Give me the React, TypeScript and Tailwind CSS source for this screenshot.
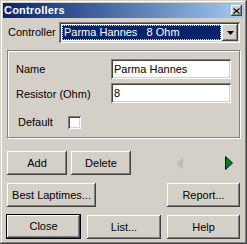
const raised =
  "bg-[#d4d0c8] shadow-[inset_-1px_-1px_#404040,inset_1px_1px_#ffffff,inset_-2px_-2px_#808080,inset_2px_2px_#d4d0c8]";
const sunken =
  "bg-white shadow-[inset_1px_1px_#808080,inset_-1px_-1px_#ffffff,inset_2px_2px_#404040,inset_-2px_-2px_#d4d0c8]";

function Btn({ label, w, def }: { label: string; w: string; def?: boolean }) {
  if (def) {
    return (
      <div className={`${w} h-[25px] -mt-[1px] border border-black`}>
        <div className={`${raised} flex h-full w-full items-center justify-center`}>{label}</div>
      </div>
    );
  }
  return <div className={`${raised} ${w} flex h-[24px] items-center justify-center`}>{label}</div>;
}

export default function App() {
  return (
    <div
      className="flex h-[244px] w-[247px] flex-col bg-[#d4d0c8] p-[3px] text-[11px] leading-none text-black shadow-[inset_-1px_-1px_#404040,inset_1px_1px_#d4d0c8,inset_-2px_-2px_#808080,inset_2px_2px_#ffffff]"
      style={{ fontFamily: '"Liberation Sans", Arial, sans-serif' }}
    >
      <div className="flex h-[15px] items-center justify-between bg-gradient-to-r from-[#0a246a] to-[#a6caf0] pl-[1px] pr-[2px]">
        <span className="text-[11px] font-bold tracking-[0.2px] text-white">Controllers</span>
        <div className={`${raised} flex h-[11px] w-[11px] items-center justify-center`}>
          <svg width="7" height="6" viewBox="0 0 7 6">
            <path d="M0.5 0.5 L6.5 5.5 M6.5 0.5 L0.5 5.5" stroke="#000" strokeWidth="1.1" />
          </svg>
        </div>
      </div>

      <div className="flex flex-1 flex-col px-[4px]">
        <div className="mt-[4px] flex items-center">
          <span className="ml-[1px] w-[51px]">Controller</span>
          <div className={`${sunken} flex h-[21px] flex-1 items-center p-[2px]`}>
            <div className="ml-[1px] flex h-[15px] flex-1 items-center border border-dotted border-[#e8dc8c] bg-[#0a246a] pl-[1px] whitespace-pre text-white">
              Parma Hannes   8 Ohm
            </div>
            <div className={`${raised} ml-[1px] flex h-[17px] w-[16px] items-center justify-center`}>
              <svg width="7" height="4" viewBox="0 0 7 4">
                <path d="M0 0 H7 L3.5 4 Z" fill="#000" />
              </svg>
            </div>
          </div>
        </div>

        <div className="mt-[7px] flex h-[88px] flex-col border border-[#808080] shadow-[inset_1px_1px_#ffffff,1px_1px_#ffffff]">
          <div className="mt-[8px] flex items-center">
            <span className="ml-[8px]">Name</span>
            <div className={`${sunken} ml-auto mr-[8px] flex h-[20px] w-[120px] items-center pl-[3px]`}>Parma Hannes</div>
          </div>
          <div className="mt-[4px] flex items-center">
            <span className="ml-[8px] mt-[3px]">Resistor (Ohm)</span>
            <div className={`${sunken} ml-auto mr-[8px] flex h-[20px] w-[120px] items-center pl-[3px]`}>8</div>
          </div>
          <div className="mt-[13px] flex items-center">
            <span className="ml-[10px] w-[50px]">Default</span>
            <div className={`${sunken} h-[13px] w-[13px]`} />
          </div>
        </div>

        <div className="mt-[13px] flex items-center">
          <Btn label="Add" w="w-[60px]" />
          <div className="w-[4px]" />
          <Btn label="Delete" w="w-[60px]" />
          <svg className="ml-[45px]" width="7" height="13" viewBox="0 0 7 13">
            <path d="M7 0 L0 6.5 L7 13 Z" fill="#c0bdb6" />
          </svg>
          <svg className="ml-[42px]" width="8" height="14" viewBox="0 0 8 14">
            <path d="M0.5 0.5 L7.5 7 L0.5 13.5 Z" fill="#008000" stroke="#000080" strokeWidth="1" />
          </svg>
        </div>

        <div className="mt-[8px] flex items-center justify-between">
          <Btn label="Best Laptimes..." w="w-[89px]" />
          <Btn label="Report..." w="w-[73px]" />
        </div>

        <div className="mt-[8px] flex items-center justify-between">
          <div className="-ml-[1px]">
            <Btn label="Close" w="w-[75px]" def />
          </div>
          <Btn label="List..." w="w-[74px]" />
          <Btn label="Help" w="w-[73px]" />
        </div>
      </div>
    </div>
  );
}
